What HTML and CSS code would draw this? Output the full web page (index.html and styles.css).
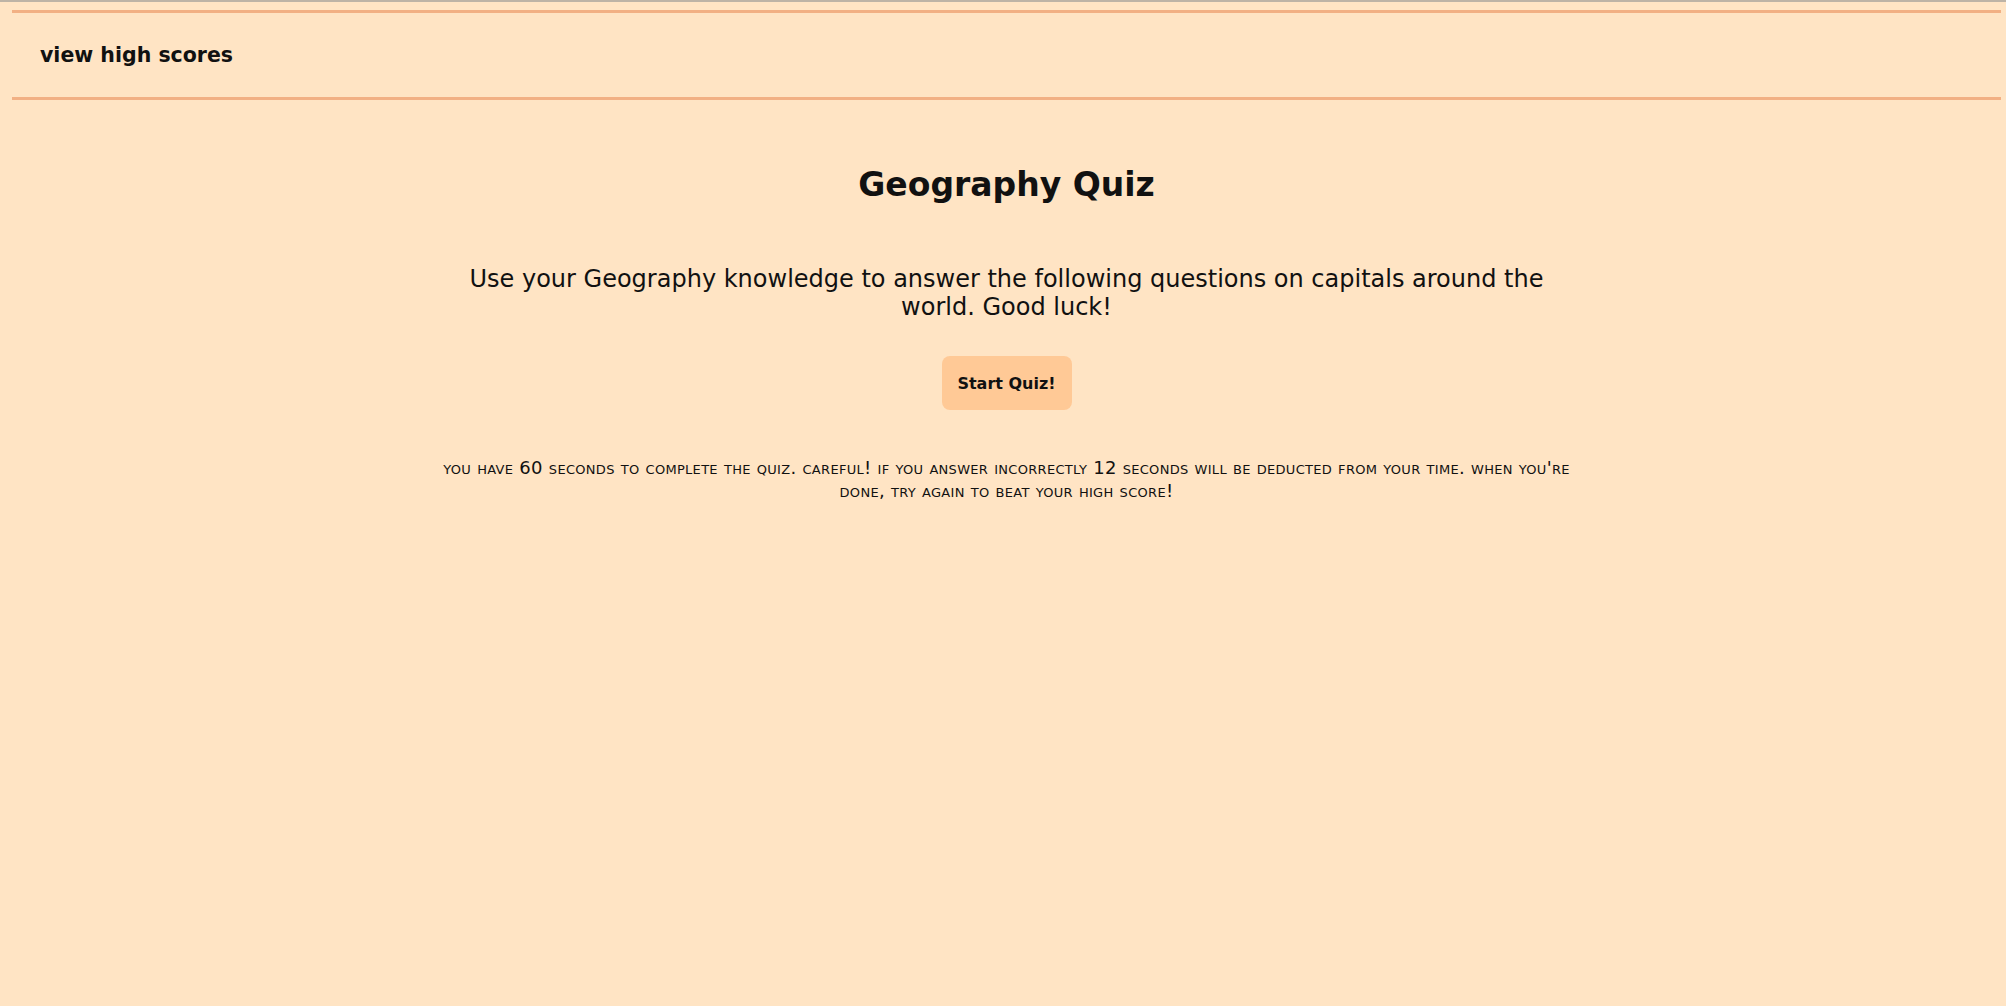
FILE: index.html
```html
<!DOCTYPE html>
<html lang="en">
<head>
<meta charset="utf-8">
<title>Geography Quiz</title>
<link rel="stylesheet" href="styles.css">
</head>
<body>
<div class="page">
  <header class="topbar">
    <a class="scores-link">view high scores</a>
  </header>
  <main class="main">
    <h1 class="title">Geography Quiz</h1>
    <p class="intro">Use your Geography knowledge to answer the following questions on capitals around the world. Good luck!</p>
    <button class="start-btn" type="button">Start Quiz!</button>
    <p class="rules">You have 60 seconds to complete the quiz. Careful! If you answer incorrectly 12 seconds will be deducted from your time. When you're done, try again to beat your high score!</p>
  </main>
</div>
</body>
</html>
```

FILE: styles.css
```css
html, body {
  margin: 0;
  padding: 0;
  background: #ffe4c4;
  height: 100%;
}

body {
  font-family: "DejaVu Sans", "Liberation Sans", sans-serif;
  color: #111;
  border-top: 2px solid #bdb3a6;
  box-sizing: border-box;
}

.page {
  padding: 8px 5px 0 12px;
}

.topbar {
  display: flex;
  align-items: center;
  height: 84px;
  padding-left: 28px;
  border-top: 3px solid #f2b084;
  border-bottom: 3px solid #f2b084;
}

.scores-link {
  font-size: 20.5px;
  font-weight: bold;
  color: #111;
  cursor: pointer;
}

.main {
  width: 1140px;
  margin: 0 auto;
  display: flex;
  flex-direction: column;
  align-items: center;
  text-align: center;
}

.title {
  margin: 65px 0 0;
  font-size: 33px;
  line-height: 40px;
  font-weight: bold;
}

.intro {
  margin: 60px 0 0;
  font-size: 24px;
  line-height: 28px;
}

.start-btn {
  margin-top: 35px;
  width: 130px;
  height: 54px;
  border: none;
  border-radius: 8px;
  background: #ffc996;
  font-family: "DejaVu Sans", "Liberation Sans", sans-serif;
  font-size: 16px;
  font-weight: bold;
  color: #111;
  cursor: pointer;
}

.rules {
  margin: 46px 0 0;
  font-size: 18px;
  line-height: 23px;
  letter-spacing: 0.3px;
  font-variant: small-caps;
  text-transform: lowercase;
}
```
